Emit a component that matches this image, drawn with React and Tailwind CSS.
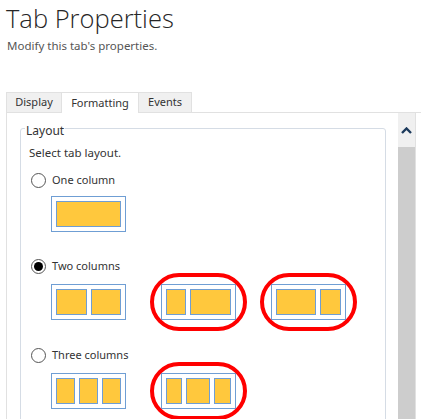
import React from "react";

const Box = ({ cells }) => (
  <div className="w-[75px] h-[36px] border border-[#6f9ed4] p-[4px] flex gap-[4px] bg-white">
    {cells.map((w, i) => (
      <div key={i} className="h-full border border-[#6f9ed4] bg-[#ffc83d]" style={{ flexGrow: w, flexBasis: 0 }} />
    ))}
  </div>
);

const Circled = ({ children }) => (
  <div className="relative">
    {children}
    <span className="absolute -left-[11px] -right-[11px] -top-[11px] -bottom-[11px] rounded-full border-[4px] border-[#ff0000] pointer-events-none" />
  </div>
);

const Radio = ({ checked, label }) => (
  <div className="flex items-center h-[16px] ml-[2px]">
    <span className="w-[15px] h-[15px] rounded-full border border-[#555] flex items-center justify-center bg-white">
      {checked && <span className="w-[9px] h-[9px] rounded-full bg-black" />}
    </span>
    <span className="ml-[6px] text-[11px] text-[#333]">{label}</span>
  </div>
);

export default function App() {
  return (
    <div className="w-[421px] h-[419px] overflow-hidden bg-white" style={{ fontFamily: '"Noto Sans", "Open Sans", sans-serif' }}>
      <div className="pl-[6px] pt-[1px]">
        <div className="text-[25.5px] leading-[34px] font-light text-[#262626]" style={{ fontFamily: '"Open Sans", sans-serif' }}>Tab Properties</div>
        <div className="text-[11.5px] leading-[16px] text-[#555] mt-[3px] ml-[1px]">Modify this tab's properties.</div>
      </div>
      <div className="ml-[6px] mt-[38px] flex h-[21px] text-[11px] text-[#333]">
        <div className="w-[56px] bg-[#f0f0f0] border border-[#e1e1e1] flex items-center justify-center">Display</div>
        <div className="w-[76px] bg-white border-t border-[#e1e1e1] flex items-center justify-center">Formatting</div>
        <div className="w-[54px] bg-[#f0f0f0] border border-[#e1e1e1] flex items-center justify-center">Events</div>
        <div className="flex-1 border-b border-[#e1e1e1]" />
      </div>
      <div className="ml-[6px] w-[410px] h-[400px] border-l border-r border-[#e1e1e1] flex">
        <div className="flex-1 pl-[13px] pr-[12px] pt-[15px]">
          <div className="border border-[#d5dce5] rounded-[3px] h-[400px] pl-[8px]">
            <div className="-mt-[6px] ml-[-4px] h-[16px] leading-[16px] text-[12px] text-[#333]">
              <span className="bg-white px-[1px]">Layout</span>
            </div>
            <div className="mt-[6px] h-[16px] leading-[16px] text-[11.5px] text-[#333]">Select tab layout.</div>
            <div className="mt-[11px]">
              <Radio label="One column" />
              <div className="mt-[8px] ml-[22px]">
                <Box cells={[1]} />
              </div>
            </div>
            <div className="mt-[26px]">
              <Radio checked label="Two columns" />
              <div className="mt-[10px] ml-[22px] flex gap-[35px]">
                <Box cells={[1, 1]} />
                <Circled><Box cells={[19, 41]} /></Circled>
                <Circled><Box cells={[41, 20]} /></Circled>
              </div>
            </div>
            <div className="mt-[27px]">
              <Radio label="Three columns" />
              <div className="mt-[10px] ml-[22px] flex gap-[35px]">
                <Box cells={[1, 1, 1]} />
                <Circled><Box cells={[15, 25, 16]} /></Circled>
              </div>
            </div>
          </div>
        </div>
        <div className="w-[17px] flex flex-col">
          <div className="h-[34px] bg-[#f0f0f0] flex items-center justify-center">
            <svg width="11" height="7" viewBox="0 0 11 7">
              <path d="M1 6 L5.5 1.5 L10 6" fill="none" stroke="#1c3a5c" strokeWidth="2.4" />
            </svg>
          </div>
          <div className="flex-1 bg-[#cdcdcd]" />
        </div>
      </div>
    </div>
  );
}
